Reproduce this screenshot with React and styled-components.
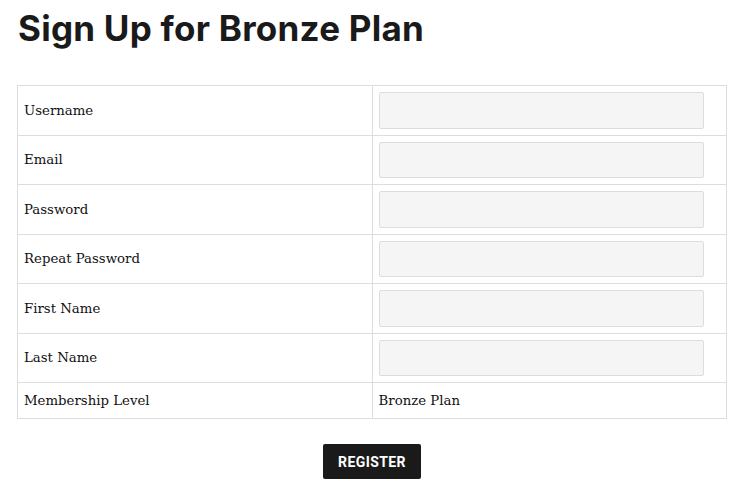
import React from 'react'
import styled, { createGlobalStyle } from 'styled-components'

const GlobalStyle = createGlobalStyle`
  body {
    margin: 0;
    background: #fff;
    font-family: "DejaVu Serif", serif;
    color: #1a1a1a;
  }
`

const Page = styled.div`
  padding: 0 13px 0 17px;
`

const Title = styled.h1`
  font-family: "Inter", sans-serif;
  font-weight: 700;
  font-size: 35px;
  line-height: 44px;
  letter-spacing: 0.25px;
  color: #1a1a1a;
  margin: 6px 0 35px 1px;
`

const Table = styled.table`
  width: 100%;
  border-collapse: collapse;
  table-layout: fixed;
`

const Cell = styled.td`
  border: 1px solid #ddd;
  padding: ${p => (p.$field ? '6px 22px 6px 6px' : '7px 6px')};
  font-size: 13.3px;
  line-height: 21px;
  color: #111;
  vertical-align: middle;
`

const Input = styled.input`
  display: block;
  box-sizing: border-box;
  width: 100%;
  height: 36.5px;
  background: #f5f5f5;
  border: 1px solid #ddd;
  border-radius: 2px;
  margin: 0;
`

const Actions = styled.div`
  display: flex;
  justify-content: center;
  padding-top: 25px;
`

const Button = styled.button`
  background: #1a1a1a;
  color: #fff;
  border: none;
  border-radius: 2px;
  height: 35px;
  padding: 0 15px;
  font-family: "Liberation Sans Narrow", "Roboto", sans-serif;
  font-weight: 700;
  font-size: 14px;
  letter-spacing: 0.4px;
`

const fields = [
  ['Username', 'text'],
  ['Email', 'email'],
  ['Password', 'password'],
  ['Repeat Password', 'password'],
  ['First Name', 'text'],
  ['Last Name', 'text'],
]

export default function App() {
  return (
    <Page>
      <GlobalStyle />
      <Title>Sign Up for Bronze Plan</Title>
      <Table>
        <tbody>
          {fields.map(([label, type]) => (
            <tr key={label}>
              <Cell>{label}</Cell>
              <Cell $field>
                <Input type={type} />
              </Cell>
            </tr>
          ))}
          <tr>
            <Cell>Membership Level</Cell>
            <Cell>Bronze Plan</Cell>
          </tr>
        </tbody>
      </Table>
      <Actions>
        <Button>REGISTER</Button>
      </Actions>
    </Page>
  )
}
